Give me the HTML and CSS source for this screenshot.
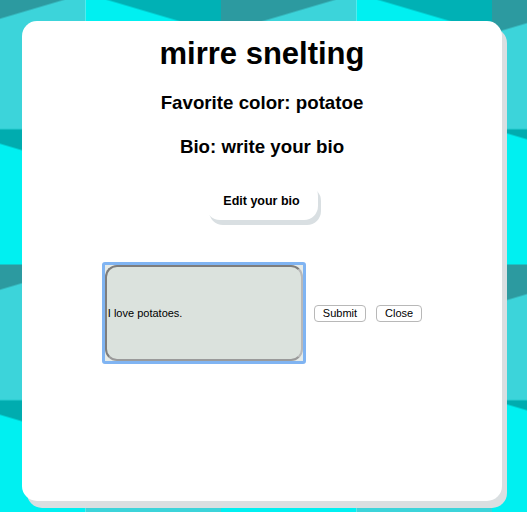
FILE: index.html
```html
<!DOCTYPE html>
<html>
<head>
<meta charset="utf-8">
<link rel="stylesheet" href="styles.css">
</head>
<body>
<div class="stage">
  <svg class="bg" width="527" height="512" viewBox="0 0 527 512" xmlns="http://www.w3.org/2000/svg">
    <defs>
      <pattern id="tiles" patternUnits="userSpaceOnUse" x="-50" y="-6.5" width="271" height="271">
        <rect x="0" y="0" width="135.5" height="135.5" fill="#3cd4da"/>
        <polygon points="0,0 135.5,0 0,40" fill="#2c9aa0"/>
        <rect x="135.5" y="0" width="135.5" height="135.5" fill="#00f0f1"/>
        <polygon points="135.5,0 271,0 271,40" fill="#00b1b5"/>
        <rect x="0" y="135.5" width="135.5" height="135.5" fill="#00f0f1"/>
        <polygon points="0,135.5 135.5,135.5 135.5,175.5" fill="#00acaf"/>
        <rect x="135.5" y="135.5" width="135.5" height="135.5" fill="#3cd4da"/>
        <polygon points="135.5,135.5 271,135.5 135.5,175.5" fill="#2c9aa0"/>
      </pattern>
    </defs>
    <rect width="527" height="512" fill="url(#tiles)"/>
  </svg>
  <main class="card">
    <h1 class="name">mirre snelting</h1>
    <h3 class="fact">Favorite color: potatoe</h3>
    <h3 class="fact fact-bio">Bio: write your bio</h3>
    <button class="edit-btn">Edit your bio</button>
    <div class="bio-row">
      <span class="focus-ring"><input class="bio-input" type="text" value="I love potatoes."></span>
      <button class="small-btn submit-btn">Submit</button>
      <button class="small-btn">Close</button>
    </div>
  </main>
</div>
</body>
</html>
```
FILE: styles.css
```css
html, body {
  margin: 0;
  padding: 0;
}

body {
  font-family: "Liberation Sans", Arial, Helvetica, sans-serif;
  color: #000;
  overflow: hidden;
}

.stage {
  display: grid;
  width: 527px;
  height: 512px;
  overflow: hidden;
}

.bg {
  grid-area: 1 / 1;
  display: block;
}

.card {
  grid-area: 1 / 1;
  align-self: start;
  justify-self: start;
  margin: 21px 0 0 22px;
  width: 480px;
  height: 480px;
  box-sizing: border-box;
  padding-top: 15px;
  background: #fff;
  border-radius: 15px;
  box-shadow: 5px 7px 0 #dadfe1;
  display: flex;
  flex-direction: column;
  align-items: center;
}

.name {
  margin: 0;
  font-size: 31px;
  line-height: 36px;
  font-weight: bold;
}

.fact {
  margin: 20px 0 0;
  font-size: 18.72px;
  line-height: 22px;
  font-weight: bold;
}

.fact-bio {
  margin-top: 22px;
}

.edit-btn {
  margin-top: 24px;
  padding: 12px 18px 12px 17px;
  border: none;
  border-radius: 14px;
  background: #fff;
  box-shadow: 3px 5px 0 #d9dfe2;
  font-family: "Liberation Sans", Arial, Helvetica, sans-serif;
  font-size: 12.5px;
  line-height: 14px;
  font-weight: bold;
  color: #000;
}

.bio-row {
  margin-top: 42px;
  display: flex;
  align-items: center;
}

.focus-ring {
  display: block;
  border: 3px solid #80b4f2;
  border-radius: 3px;
  background: #e6ebe8;
}

.bio-input {
  display: block;
  width: 198px;
  height: 96px;
  box-sizing: border-box;
  margin: 0;
  padding: 0 0 0 1px;
  border: 2px solid;
  border-color: #7d7d7d #b9b9b9 #9a9a9a #7d7d7d;
  border-radius: 12px;
  background: #dbe2dd;
  font-family: "Liberation Sans", Arial, Helvetica, sans-serif;
  font-size: 11px;
  color: #000;
  outline: none;
}

.small-btn {
  margin: 0 0 0 10px;
  padding: 1px 8px;
  border: 1px solid #b8b8b8;
  border-radius: 4px;
  background: #fff;
  font-family: "Liberation Sans", Arial, Helvetica, sans-serif;
  font-size: 11px;
  line-height: 13px;
  color: #000;
}

.submit-btn {
  margin-left: 8px;
}
```
